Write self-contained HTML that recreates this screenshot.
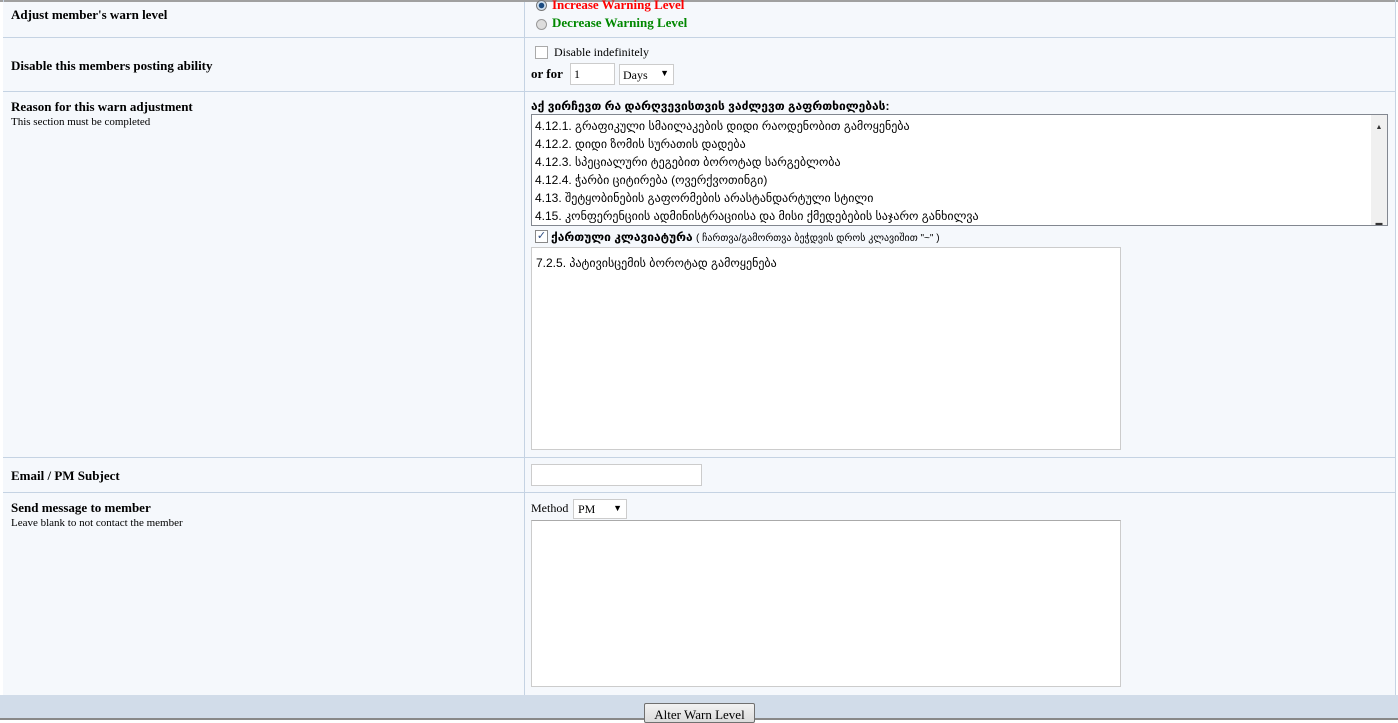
<!DOCTYPE html>
<html><head><meta charset="utf-8"><style>
*{margin:0;padding:0;box-sizing:border-box}
body{width:1398px;height:720px;background:#fff;position:relative;overflow:hidden;font-family:"Liberation Serif",serif;font-size:12px;color:#000}
.row{position:absolute;left:3px;width:1392px;background:#f5f8fc;border-bottom:1px solid #c5d3e3}
.vl{position:absolute;left:524px;width:1px;background:#c5d3e3}
.a{position:absolute;white-space:nowrap}
b{font-weight:bold}
.box{position:absolute;background:#fff;border:1px solid #abadb3}
.ge{font-family:"Liberation Sans","DejaVu Sans",sans-serif;font-size:12px}
</style></head><body>
<div style="position:absolute;left:0;top:0;width:1398px;height:2px;background:#a0a0a0"></div>
<div style="position:absolute;left:3px;top:0;width:1px;height:695px;background:#c5d3e3"></div>
<div style="position:absolute;left:1395px;top:0;width:1px;height:695px;background:#c5d3e3"></div>
<div class="row" style="top:2px;height:36px"></div>
<div class="row" style="top:38px;height:54px"></div>
<div class="row" style="top:92px;height:366px"></div>
<div class="row" style="top:458px;height:35px"></div>
<div class="row" style="top:493px;height:202px;border-bottom:none"></div>
<div class="vl" style="top:2px;height:693px"></div>

<div class="a" style="left:11px;top:7px;font-size:13px"><b>Adjust member's warn level</b></div>
<div class="a" style="left:536px;top:0px;width:11px;height:11px;border-radius:50%;border:1px solid #777;background:radial-gradient(circle,#1a4a80 0 2.5px,#cfe0f0 3px)"></div>
<div class="a" style="left:552px;top:-3px;color:#f00;font-size:13px"><b>Increase Warning Level</b></div>
<div class="a" style="left:536px;top:19px;width:11px;height:11px;border-radius:50%;border:1px solid #999;background:#ddd"></div>
<div class="a" style="left:552px;top:15px;color:#080;font-size:13px"><b>Decrease Warning Level</b></div>

<div class="a" style="left:11px;top:58px;font-size:13px"><b>Disable this members posting ability</b></div>
<div class="box" style="left:535px;top:46px;width:13px;height:13px;border-color:#aaa"></div>
<div class="a" style="left:554px;top:45px">Disable indefinitely</div>
<div class="a" style="left:531px;top:66px;font-size:13px"><b>or for</b></div>
<div class="box" style="left:570px;top:63px;width:45px;height:22px;border-color:#ccc;padding:3px">1</div>
<div class="box" style="left:619px;top:64px;width:55px;height:21px;border-color:#ccc;padding:3px">Days<span style="position:absolute;right:4px;top:3px;font-size:9px">▼</span></div>

<div class="a" style="left:11px;top:99px;font-size:13px"><b>Reason for this warn adjustment</b></div>
<div class="a" style="left:11px;top:116px;font-size:11px">This section must be completed</div>
<div class="a ge" style="left:531px;top:99px"><b>აქ ვირჩევთ რა დარღვევისთვის ვაძლევთ გაფრთხილებას:</b></div>
<div class="box ge" style="left:531px;top:114px;width:857px;height:112px;border-color:#828790;padding:2px 3px;line-height:18px;overflow:hidden">
4.12.1. გრაფიკული სმაილაკების დიდი რაოდენობით გამოყენება<br>4.12.2. დიდი ზომის სურათის დადება<br>4.12.3. სპეციალური ტეგებით ბოროტად სარგებლობა<br>4.12.4. ჭარბი ციტირება (ოვერქვოთინგი)<br>4.13. შეტყობინების გაფორმების არასტანდარტული სტილი<br>4.15. კონფერენციის ადმინისტრაციისა და მისი ქმედებების საჯარო განხილვა
<div style="position:absolute;right:0;top:0;width:16px;height:110px;background:#f0f0f0;font-size:7px;text-align:center;color:#333"><div style="margin-top:4px">▲</div><div style="margin-top:78px">▬</div><div>▼</div></div>
</div>
<div class="box" style="left:535px;top:230px;width:13px;height:13px;border-color:#888;font-size:11px;line-height:11px;text-align:center;color:#2b4a80">✓</div>
<div class="a ge" style="left:551px;top:230px"><b>ქართული კლავიატურა</b> <span style="font-size:10px">( ჩართვა/გამორთვა ბეჭდვის დროს კლავიშით "~" )</span></div>
<div class="box ge" style="left:531px;top:247px;width:590px;height:203px;border-color:#ccc;padding:8px 4px">7.2.5. პატივისცემის ბოროტად გამოყენება</div>

<div class="a" style="left:11px;top:468px;font-size:13px"><b>Email / PM Subject</b></div>
<div class="box" style="left:531px;top:464px;width:171px;height:22px;border-color:#ccc"></div>

<div class="a" style="left:11px;top:500px;font-size:13px"><b>Send message to member</b></div>
<div class="a" style="left:11px;top:517px;font-size:11px">Leave blank to not contact the member</div>
<div class="a" style="left:531px;top:501px">Method</div>
<div class="box" style="left:573px;top:499px;width:54px;height:20px;border-color:#ccc;padding:2px 4px">PM<span style="position:absolute;right:4px;top:3px;font-size:9px">▼</span></div>
<div class="box" style="left:531px;top:520px;width:590px;height:167px;border-color:#ccc;border-top-color:#aaa"></div>

<div style="position:absolute;left:0;top:695px;width:1398px;height:25px;background:#d1dce9"></div>
<div style="position:absolute;left:0;top:718px;width:1398px;height:2px;background:#888"></div>
<div class="box" style="left:644px;top:703px;width:111px;height:20px;border:1px solid #707070;border-radius:2px;background:linear-gradient(#f2f2f2,#dcdcdc);text-align:center;font-size:13px;padding-top:3px">Alter Warn Level</div>
</body></html>
